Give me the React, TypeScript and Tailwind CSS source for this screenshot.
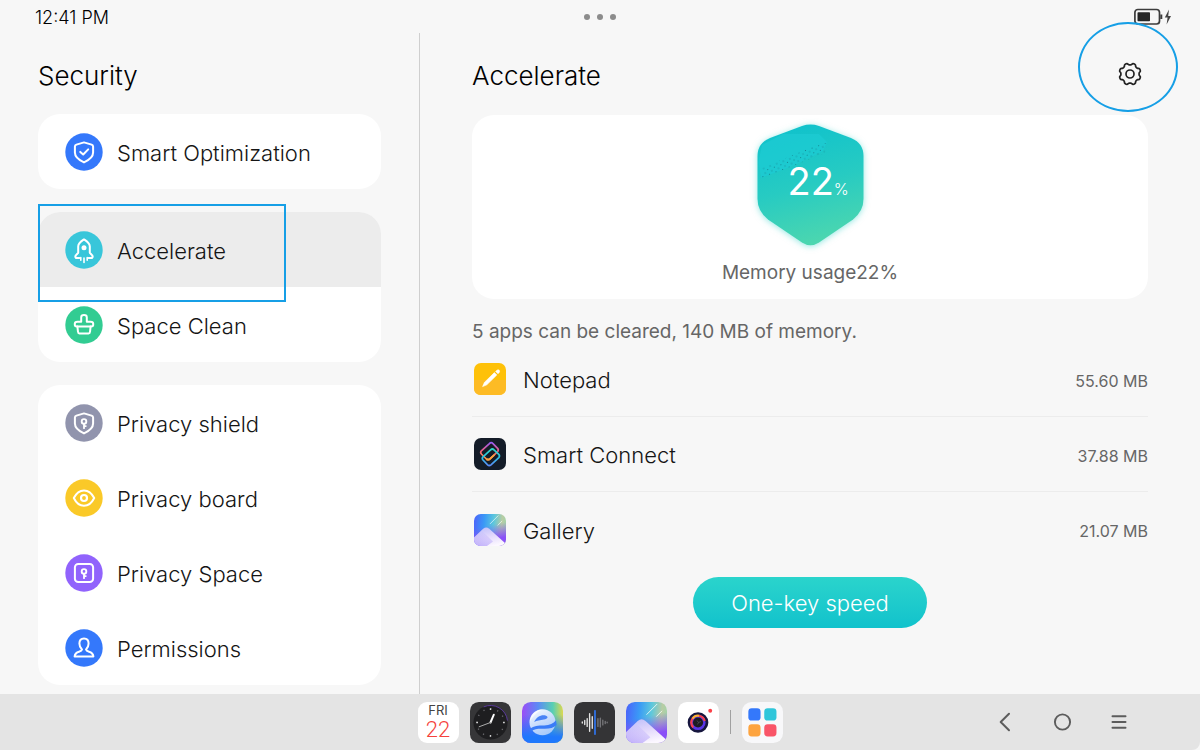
import type { ReactNode } from "react";

function Badge({ fill, children }: { fill: string; children: ReactNode }) {
  return (
    <svg
      viewBox="0 0 38 38"
      className="size-[38px] shrink-0"
      fill="none"
      stroke="#fff"
      strokeWidth="2"
      strokeLinecap="round"
      strokeLinejoin="round"
      aria-hidden="true"
    >
      <circle cx="19" cy="19" r="18.7" fill={fill} stroke="none" />
      {children}
    </svg>
  );
}

const shieldPath =
  "M19 9.4L26.6 11.6Q28.1 12.1 28.1 13.6V19.6C28.1 24.4 24 27.2 19 29.4C14 27.2 9.9 24.4 9.9 19.6V13.6Q9.9 12.1 11.4 11.6Z";

function KeyHole() {
  return (
    <>
      <circle cx="19" cy="17.4" r="2.3" strokeWidth="1.9" />
      <path d="M19 19.8V24.2M19.6 22.1H20.8" strokeWidth="1.8" />
    </>
  );
}

type Item = { label: string; icon: ReactNode; active?: boolean };

const groups: Item[][] = [
  [
    {
      label: "Smart Optimization",
      icon: (
        <Badge fill="#3478fb">
          <path d={shieldPath} />
          <path d="M15.3 18.9L18.2 21.5L23.2 16.4" />
        </Badge>
      ),
    },
  ],
  [
    {
      label: "Accelerate",
      active: true,
      icon: (
        <Badge fill="#38c6da">
          <path d="M14.4 27H11Q9.8 26 10.8 24.4L13.2 21.8V15.4C13.2 12 16.4 10.2 19 8.4C21.6 10.2 24.8 12 24.8 15.4V21.8L27.2 24.4Q28.2 26 27 27H23.6" />
          <circle cx="19" cy="16.8" r="2.5" fill="#fff" stroke="none" />
          <path d="M19 27V31.4M15.8 26.6V29.2M22.2 26.6V29.2" strokeWidth="1.6" />
        </Badge>
      ),
    },
    {
      label: "Space Clean",
      icon: (
        <Badge fill="#32cc92">
          <path d="M16.2 15.8V11.4Q16.2 9.1 19 9.1Q21.8 9.1 21.8 11.4V15.8H25.6Q28.2 15.8 28.2 17.8V18.8Q28.2 20.4 26.2 20.4H11.8Q9.8 20.4 9.8 18.8V17.8Q9.8 15.8 12.4 15.8Z" />
          <path d="M12.4 20.6L13 25.8Q13.1 27.4 14.4 27.4H23.6Q24.9 27.4 25 25.8L25.6 20.6" />
        </Badge>
      ),
    },
  ],
  [
    {
      label: "Privacy shield",
      icon: (
        <Badge fill="#9194ad">
          <path d={shieldPath} />
          <KeyHole />
        </Badge>
      ),
    },
    {
      label: "Privacy board",
      icon: (
        <Badge fill="#fac928">
          <path d="M8.8 19Q12.6 11.4 19 11.4Q25.4 11.4 29.2 19Q25.4 26.8 19 26.8Q12.6 26.8 8.8 19Z" />
          <circle cx="19" cy="19" r="3" strokeWidth="2.2" />
        </Badge>
      ),
    },
    {
      label: "Privacy Space",
      icon: (
        <Badge fill="#9163fc">
          <rect x="9.9" y="9.9" width="18.2" height="18.2" rx="3.4" />
          <KeyHole />
        </Badge>
      ),
    },
    {
      label: "Permissions",
      icon: (
        <Badge fill="#3478fb">
          <path d="M17 20.6C15.2 19 14.4 17 14.4 14.6C14.4 11.4 16.2 9.4 19 9.4C21.8 9.4 23.6 11.4 23.6 14.6C23.6 17 22.8 19 21 20.6Q21.4 22.2 24 22.8C26.6 23.5 28 24.4 28.4 27.4H9.6C10 24.4 11.4 23.5 14 22.8Q16.6 22.2 17 20.6Z" />
        </Badge>
      ),
    },
  ],
];

function NotepadIcon() {
  return (
    <svg viewBox="0 0 32 32" className="size-8 shrink-0" aria-hidden="true">
      <rect width="32" height="32" rx="7" fill="#fec108" />
      <path d="M0 17H32V25Q32 32 25 32H7Q0 32 0 25Z" fill="#fdbb25" />
      <path d="M8.6 23.6L10.4 19.4L20.4 9.6L22.8 12L12.8 21.8Z" fill="#fff" stroke="#fff" strokeWidth=".6" strokeLinejoin="round" />
      <path d="M21.6 8.4L23 7.200Q24.200 6.400 25.200 7.200Q26 8.200 25.200 9.400L24 10.800Z" fill="#fff" stroke="#fff" strokeWidth=".6" />
    </svg>
  );
}

function ConnectIcon() {
  return (
    <svg viewBox="0 0 32 32" className="size-8 shrink-0" fill="none" aria-hidden="true">
      <defs>
        <linearGradient id="sc-a" x1="0" y1="0" x2="0" y2="1">
          <stop offset="0" stopColor="#9a5cf5" />
          <stop offset=".5" stopColor="#f0607a" />
          <stop offset="1" stopColor="#fba040" />
        </linearGradient>
        <linearGradient id="sc-b" x1="0" y1="0" x2="0" y2="1">
          <stop offset="0" stopColor="#2fd8c8" />
          <stop offset=".5" stopColor="#2cc4e4" />
          <stop offset="1" stopColor="#5a8cf8" />
        </linearGradient>
      </defs>
      <rect width="32" height="32" rx="7" fill="#141c28" />
      <path
        d="M15.4 5.6Q17.2 3.8 19 5.6L23.6 10.4Q25 12 23.6 13.6L15.8 21Q14 22.4 12.4 21L7.4 16Q6 14.4 7.4 12.8Z"
        stroke="url(#sc-a)"
        strokeWidth="1.7"
      />
      <path
        d="M16.6 11.8Q18.4 10.2 20 11.8L24.8 16.4Q26.2 18 24.8 19.6L17 26.8Q15.2 28.2 13.6 26.8L9 22Q7.6 20.4 9 18.8Z"
        stroke="url(#sc-b)"
        strokeWidth="1.7"
      />
      <path d="M20.4 16.8L15.8 21Q14 22.4 12.4 21" stroke="#fba040" strokeWidth="1.7" />
    </svg>
  );
}

function GalleryIcon({ id, className }: { id: string; className: string }) {
  return (
    <svg viewBox="0 0 42 42" className={className} aria-hidden="true">
      <defs>
        <linearGradient id={`${id}-sky`} x1="0" y1=".4" x2="1" y2=".5">
          <stop offset="0" stopColor="#4a68fa" />
          <stop offset=".3" stopColor="#3a9af6" />
          <stop offset=".6" stopColor="#5ec8dc" />
          <stop offset=".85" stopColor="#b8cca4" />
          <stop offset="1" stopColor="#a0d4a8" />
        </linearGradient>
        <linearGradient id={`${id}-low`} x1=".4" y1="0" x2=".6" y2="1">
          <stop offset=".35" stopColor="#8a50f8" stopOpacity="0" />
          <stop offset=".8" stopColor="#8a50f8" />
        </linearGradient>
        <linearGradient id={`${id}-hill`} x1=".2" y1="0" x2=".6" y2="1">
          <stop offset="0" stopColor="#c0c0fa" />
          <stop offset=".5" stopColor="#e2d8fc" />
          <stop offset="1" stopColor="#fcf8ff" />
        </linearGradient>
        <linearGradient id={`${id}-near`} x1=".5" y1="0" x2=".3" y2="1">
          <stop offset="0" stopColor="#a89cfa" stopOpacity="0" />
          <stop offset="1" stopColor="#a48cf8" stopOpacity=".6" />
        </linearGradient>
        <clipPath id={`${id}-clip`}>
          <rect width="42" height="42" rx="9" />
        </clipPath>
      </defs>
      <g clipPath={`url(#${id}-clip)`}>
        <rect width="42" height="42" fill={`url(#${id}-sky)`} />
        <rect width="42" height="42" fill={`url(#${id}-low)`} />
        <path d="M0 31L12 19.500Q16 16 20 19.500L41 38.500V42H0Z" fill={`url(#${id}-hill)`} />
        <path d="M0 31L10 21.500L25 36L17 42H0Z" fill={`url(#${id}-near)`} />
        <path d="M21 13L32 2M31 15L37 9" stroke="#fff" strokeWidth="1" opacity=".8" />
      </g>
    </svg>
  );
}

const apps = [
  { name: "Notepad", size: "55.60 MB", icon: <NotepadIcon /> },
  { name: "Smart Connect", size: "37.88 MB", icon: <ConnectIcon /> },
  {
    name: "Gallery",
    size: "21.07 MB",
    icon: <GalleryIcon id="gallery" className="size-8 shrink-0" />,
  },
];

function UsageShield() {
  return (
    <svg viewBox="0 0 107 122" className="h-[122px] w-[107px] drop-shadow-[0_1px_3px_#29cfc680]" aria-hidden="true">
      <defs>
        <linearGradient id="usage" x1=".35" y1="0" x2=".6" y2="1">
          <stop offset="0" stopColor="#10c2cc" />
          <stop offset=".5" stopColor="#27cbc2" />
          <stop offset="1" stopColor="#4ed7ae" />
        </linearGradient>
        <pattern id="grain" width="7" height="5" patternUnits="userSpaceOnUse" patternTransform="rotate(-20)">
          <rect x="1" y="1" width="1" height="1" fill="#158b95" />
          <rect x="4.500" y="3.500" width="1" height="1" fill="#158b95" />
        </pattern>
      </defs>
      <path
        d="M45 1.9Q53.500 -.800 62 1.900L94 14Q106.500 19 106.500 32V75Q106.500 87 96 95.500L62 118.500Q53.500 124 45 118.500L11 95.500Q.5 87 .5 75V32Q.5 19 13 14Z"
        fill="url(#usage)"
      />
      <path d="M5 21L26 10H62L70 18L66 27L38 41L4 54L1.500 38Z" fill="#1dcbd2" opacity=".8" />
      <path d="M5 44L62 20L70 19L68 29L36 42L5 54Z" fill="url(#grain)" />
    </svg>
  );
}

const tile = "size-[41px]";

function ClockIcon() {
  return (
    <svg viewBox="0 0 42 42" className={tile} aria-hidden="true">
      <rect width="42" height="42" rx="9" fill="#363638" />
      <circle cx="21" cy="21" r="17.500" fill="#1e1e20" />
      <path d="M14 5A17.500 17.500 0 0 1 38.400 19" fill="none" stroke="#5a3a9c" strokeWidth="1" />
      <circle cx="21" cy="21" r="14" fill="none" stroke="#6c6c70" strokeWidth="1.400" strokeDasharray="1.200 6.130" strokeDashoffset=".6" />
      <path d="M21 6.400V8.200M21 33.800V35.600M6.400 21H8.200M33.800 21H35.600" stroke="#d0d0d0" strokeWidth="1.400" />
      <path d="M21 21L24.400 13" stroke="#fff" strokeWidth="2" strokeLinecap="round" />
      <path d="M22 20.600L9 25.500" stroke="#b0b0b0" strokeWidth="1" />
    </svg>
  );
}

function BrowserIcon() {
  return (
    <svg viewBox="0 0 42 42" className={tile} aria-hidden="true">
      <defs>
        <linearGradient id="br-top" x1="0" y1="0" x2="1" y2="0">
          <stop offset="0" stopColor="#9a4cf6" />
          <stop offset=".4" stopColor="#5b8cf4" />
          <stop offset=".75" stopColor="#58cfb4" />
          <stop offset="1" stopColor="#dcd850" />
        </linearGradient>
        <linearGradient id="br-low" x1="0" y1="0" x2="0" y2="1">
          <stop offset=".3" stopColor="#1f72fa" stopOpacity="0" />
          <stop offset=".85" stopColor="#1f78fc" />
        </linearGradient>
        <linearGradient id="br-e" x1=".2" y1="0" x2=".7" y2="1">
          <stop offset="0" stopColor="#f4faff" />
          <stop offset=".5" stopColor="#c8dcfc" />
          <stop offset="1" stopColor="#a4c8fa" />
        </linearGradient>
      </defs>
      <rect width="42" height="42" rx="9" fill="url(#br-top)" />
      <rect width="42" height="42" rx="9" fill="url(#br-low)" />
      <circle cx="21" cy="20.800" r="13.300" fill="url(#br-e)" />
      <path d="M12.500 20.500C14.500 15.500 19.500 12.800 24 13.800C27.500 14.800 26.500 17.400 22.500 18C18.500 18.600 15.500 19.200 12.500 20.500Z" fill="#4a84f6" />
      <path d="M7.500 28.500C10.500 24.500 16 23.800 22 24C28 24.200 32 22.400 34.800 18.800L35.500 23.500C32 26.600 28 27.600 22 27.400C16.500 27.200 12.500 27.600 9.800 30Z" fill="#3a7cf8" />
      <path d="M8 20C8.500 14 13 8.200 20.500 7.600C14.500 10.500 10.500 15.500 8 20Z" fill="#fff" opacity=".7" />
    </svg>
  );
}

function RecorderIcon() {
  return (
    <svg viewBox="0 0 42 42" className={tile} fill="none" strokeLinecap="round" aria-hidden="true">
      <rect width="42" height="42" rx="9" fill="#343436" />
      <path d="M8.500 20.500V21.500M11 19V23M13.500 17V25M16 12V30M18.700 15V27" stroke="#e4e4e4" strokeWidth="1.400" />
      <path d="M21.500 9V33" stroke="#2f7bff" strokeWidth="1.600" />
      <path d="M24.500 17V25M27 16.500V25.500M29.500 18.500V23.500M32 20V22M34 20.800V21.200" stroke="#747478" strokeWidth="1.400" />
    </svg>
  );
}

function CameraIcon() {
  return (
    <svg viewBox="0 0 42 42" className={tile} fill="none" aria-hidden="true">
      <rect width="42" height="42" rx="9" fill="#fff" />
      <circle cx="20.500" cy="21" r="9.200" fill="#5a35e8" stroke="#16163e" strokeWidth="2.800" />
      <path d="M15.600 26A7 7 0 0 1 15.200 16.500" stroke="#f5424e" strokeWidth="2.200" />
      <path d="M14.800 17A7 7 0 0 1 22 14.200" stroke="#fbb034" strokeWidth="2.200" />
      <path d="M21.500 14.100A7 7 0 0 1 27.400 19.500" stroke="#f5424e" strokeWidth="2.200" />
      <circle cx="20.500" cy="21" r="5.200" fill="#1c1c22" />
      <path d="M19.500 19L21 21L23.500 20M21 21L20 23" stroke="#505058" strokeWidth=".8" />
      <circle cx="33" cy="9" r="2" fill="#fb4048" />
    </svg>
  );
}

function AppGridIcon() {
  return (
    <svg viewBox="0 0 42 42" className={tile} aria-hidden="true">
      <rect width="42" height="42" rx="10" fill="#f8f8fa" />
      <rect x="6.500" y="6.500" width="12.500" height="12.500" rx="3.500" fill="#3478fb" />
      <rect x="22.800" y="6.500" width="12.500" height="12.500" rx="3.500" fill="#30c6da" />
      <rect x="6.500" y="22.800" width="12.500" height="12.500" rx="3.500" fill="#fda440" />
      <rect x="22.800" y="22.800" width="12.500" height="12.500" rx="3.500" fill="#f95568" />
    </svg>
  );
}

function GearIcon() {
  const points: string[] = [];
  for (let i = 0; i <= 96; i++) {
    const angle = (i / 96) * Math.PI * 2;
    const radius = 10 + 0.95 * Math.tanh(1.8 * Math.cos(8 * (angle - Math.PI / 8)));
    points.push(
      `${(12 + radius * Math.cos(angle)).toFixed(2)} ${(12 + radius * Math.sin(angle)).toFixed(2)}`,
    );
  }
  return (
    <svg viewBox="0 0 24 24" className="size-6" fill="none" stroke="#222" strokeWidth="1.700" strokeLinejoin="round" aria-hidden="true">
      <path d={`M${points.join("L")}Z`} />
      <circle cx="12" cy="12" r="4" />
    </svg>
  );
}

function StatusBar() {
  return (
    <header className="grid h-[33px] grid-cols-[1fr_auto_1fr] items-center px-7">
      <time className="pt-0.5 pl-[7px] text-[18px] font-light text-black">12:41 PM</time>
      <button type="button" aria-label="Window options" className="flex items-center gap-[7px] pt-px">
        <span className="size-1.5 rounded-full bg-[#8c8c8c]" />
        <span className="size-1.5 rounded-full bg-[#8c8c8c]" />
        <span className="size-1.5 rounded-full bg-[#8c8c8c]" />
      </button>
      <svg viewBox="0 0 40 18" className="h-[18px] w-10 justify-self-end" role="img" aria-label="Battery charging">
        <rect x="2.900" y="1.500" width="24.600" height="14.500" rx="3" fill="none" stroke="#3c3c3c" strokeWidth="1.700" />
        <rect x="5.500" y="4.200" width="12.500" height="9" rx=".8" fill="#262626" />
        <path d="M29.300 6.500V11" stroke="#3c3c3c" strokeWidth="2" />
        <path d="M37 1.500L32.800 9.600H35.600L34.600 16.500L39 8H36.200Z" fill="#444" />
      </svg>
    </header>
  );
}

function Sidebar() {
  return (
    <aside className="w-[35%] shrink-0 border-r border-[#cfcfcf] px-[38px] pb-[9px]">
      <h1 className="pt-[25px] pb-5 text-[26px] leading-9 font-light text-black">Security</h1>
      <nav className="flex flex-col gap-[23px]">
        {groups.map((group) => (
          <ul key={group[0].label} className="relative rounded-[22px] bg-white">
            {group.map((item) => (
              <li key={item.label}>
                <a
                  href="#"
                  className={
                    item.active
                      ? "flex h-[75px] items-center gap-3.5 rounded-t-[22px] bg-[#ececec] pl-[27px] text-[22px] text-[#151515]"
                      : "flex h-[75px] items-center gap-3.5 pl-[27px] text-[22px] text-[#151515]"
                  }
                >
                  {item.icon}
                  <span className="pt-[3px] font-light">{item.label}</span>
                </a>
                {item.active && (
                  <span className="pointer-events-none absolute -top-2 left-0 h-[98px] w-[248px] border-2 border-[#169fe6]" />
                )}
              </li>
            ))}
          </ul>
        ))}
      </nav>
    </aside>
  );
}

function Accelerate() {
  return (
    <main className="flex-1 px-[52px]">
      <div className="flex items-start justify-between pt-[25px] pb-[21px]">
        <h2 className="text-[26px] leading-9 font-light text-black">Accelerate</h2>
        <button type="button" aria-label="Settings" className="relative mt-1 mr-1.5">
          <GearIcon />
          <span className="pointer-events-none absolute -top-10 -left-10 h-[90px] w-[100px] rounded-[50%] border-2 border-[#169fe6]" />
        </button>
      </div>

      <section className="flex flex-col items-center rounded-[22px] bg-white pt-[9px] pb-3">
        <div className="relative">
          <UsageShield />
          <p className="absolute top-[33px] left-[31px] flex items-baseline text-white">
            <span className="text-[38px] leading-[48px]">22</span>
            <span className="text-[16px] font-light">%</span>
          </p>
        </div>
        <p className="pt-[13px] text-[19px] leading-7 text-[#666]">Memory usage22%</p>
      </section>

      <p className="pt-[19px] text-[19px] leading-7 text-[#666]">
        5 apps can be cleared, 140 MB of memory.
      </p>
      <ul className="-mt-1 divide-y divide-[#ececec]">
        {apps.map((app) => (
          <li key={app.name} className="flex h-[75px] items-center pl-0.5">
            {app.icon}
            <span className="flex-1 pt-[3px] pl-[17px] text-[22px] font-light text-[#151515]">{app.name}</span>
            <span className="pt-[3px] text-[16px] text-[#666]">{app.size}</span>
          </li>
        ))}
      </ul>
      <div className="flex justify-center pt-2.5 pb-8">
        <button
          type="button"
          className="h-[51px] w-[234px] rounded-full bg-linear-to-b from-[#2ad4cc] to-[#10c2cc] pt-0.5 text-[22px] font-light text-white"
        >
          One-key speed
        </button>
      </div>
    </main>
  );
}

function Dock() {
  return (
    <footer className="grid h-14 grid-cols-[1fr_auto_1fr] items-center rounded-br-lg bg-[#e4e4e4]">
      <nav className="col-start-2 flex items-center gap-[11px]" aria-label="Dock">
        <button type="button" className="flex size-[41px] flex-col items-center rounded-[9px] bg-white">
          <span className="text-[13px] leading-4 text-[#444]">FRI</span>
          <span className="font-['Roboto',sans-serif] text-[22px] leading-6 font-light text-[#f5423c]">22</span>
        </button>
        <button type="button" aria-label="Clock"><ClockIcon /></button>
        <button type="button" aria-label="Browser"><BrowserIcon /></button>
        <button type="button" aria-label="Recorder"><RecorderIcon /></button>
        <button type="button" aria-label="Gallery"><GalleryIcon id="dock-gallery" className={tile} /></button>
        <button type="button" aria-label="Camera"><CameraIcon /></button>
        <span className="h-6 w-px bg-[#a0a0a0]" />
        <button type="button" aria-label="All apps"><AppGridIcon /></button>
      </nav>
      <nav className="flex items-center gap-[37px] justify-self-end pr-[71px]" aria-label="System">
        <button type="button" aria-label="Back">
          <svg viewBox="0 0 20 20" className="size-5" fill="none" stroke="#5c5c5c" strokeWidth="2" strokeLinecap="round" strokeLinejoin="round">
            <path d="M14 1.800L5.700 10L14 18.200" />
          </svg>
        </button>
        <button type="button" aria-label="Home">
          <svg viewBox="0 0 20 20" className="size-5" fill="none" stroke="#5c5c5c" strokeWidth="1.900">
            <circle cx="10.500" cy="10" r="7.600" />
          </svg>
        </button>
        <button type="button" aria-label="Recent apps">
          <svg viewBox="0 0 20 20" className="size-5" fill="none" stroke="#5c5c5c" strokeWidth="2" strokeLinecap="round">
            <path d="M3.500 4.300H16.500M3.500 10H16.500M3.500 15.700H16.500" />
          </svg>
        </button>
      </nav>
    </footer>
  );
}

export default function App() {
  return (
    <div className="flex min-h-screen flex-col bg-[#f7f7f7] font-['Inter','Liberation_Sans',sans-serif]">
      <StatusBar />
      <div className="flex flex-1">
        <Sidebar />
        <Accelerate />
      </div>
      <Dock />
    </div>
  );
}
